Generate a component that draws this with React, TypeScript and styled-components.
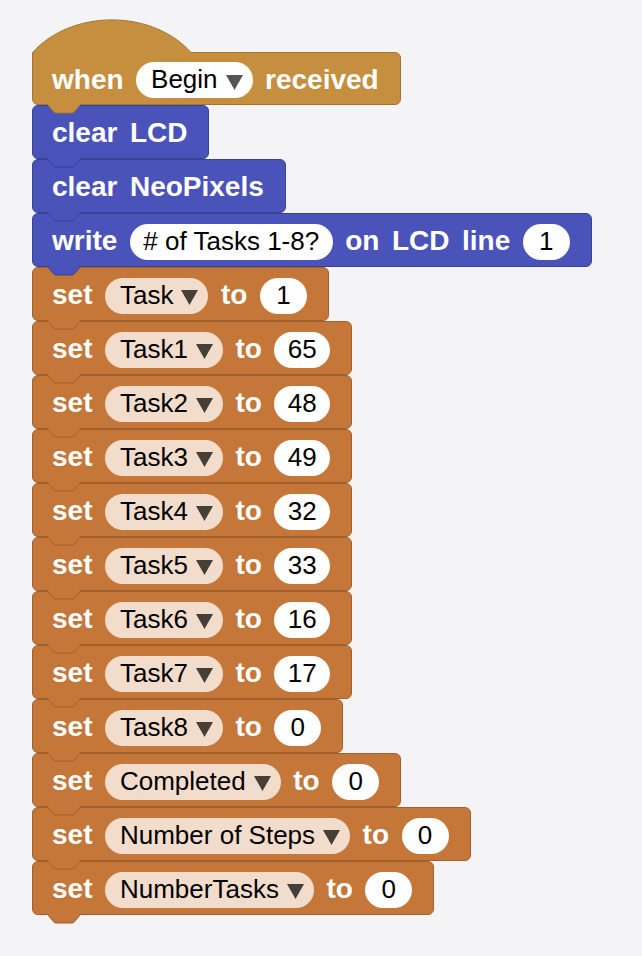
import React from "react";
import styled, { createGlobalStyle } from "styled-components";

const GlobalStyle = createGlobalStyle`
  html, body { margin: 0; padding: 0; background: #f4f4f6; }
  body { font-family: "Liberation Sans", Arial, Helvetica, sans-serif; }
`;

type Tone = "hat" | "blue" | "orange";

const palette: Record<Tone, { fill: string; stroke: string }> = {
  hat: { fill: "#c68e3f", stroke: "#a3742f" },
  blue: { fill: "#4a53b9", stroke: "#394195" },
  orange: { fill: "#c5773a", stroke: "#a2602c" },
};

const Workspace = styled.div`
  box-sizing: border-box;
  min-height: 956px;
  padding: 52px 0 40px 32px;
  display: flex;
  flex-direction: column;
  align-items: flex-start;
`;

const Shape = styled.div<{ $tone: Tone; $hat?: boolean }>`
  position: relative;
  box-sizing: border-box;
  display: inline-flex;
  align-items: center;
  gap: 12.5px;
  height: ${(p) => (p.$hat ? 53 : 54)}px;
  padding: 0 21px 0 19px;
  background: ${(p) => palette[p.$tone].fill};
  border: 1px solid ${(p) => palette[p.$tone].stroke};
  border-radius: ${(p) => (p.$hat ? "0 6px 6px 6px" : "6px")};
`;

const TabSvg = styled.svg`
  position: absolute;
  left: 14px;
  bottom: -10px;
  width: 34px;
  height: 10px;
  z-index: 2;
  overflow: visible;
`;

const CapSvg = styled.svg`
  position: absolute;
  left: -1px;
  top: -34px;
  width: 162px;
  height: 35px;
  z-index: 2;
  overflow: visible;
`;

const Label = styled.span`
  font-size: 28px;
  font-weight: 700;
  line-height: 1;
  margin-top: 2px;
  color: #ffffff;
  white-space: pre;
`;

const Pill = styled.span<{ $bg: string }>`
  box-sizing: border-box;
  display: inline-flex;
  align-items: center;
  height: 36px;
  margin-top: 3px;
  border-radius: 18px;
  background: ${(p) => p.$bg};
  font-size: 26px;
  line-height: 1;
  color: #000000;
  white-space: pre;
`;

const DropPill = styled(Pill)`
  gap: 8px;
  padding: 0 10px 2px 15px;
`;

const ValuePill = styled(Pill)`
  justify-content: center;
  min-width: 47px;
  padding: 0 13.5px 2px;
`;

const ArrowSvg = styled.svg`
  width: 17px;
  height: 15px;
  margin-top: 6px;
  flex: none;
`;

const Tab = ({ tone }: { tone: Tone }) => (
  <TabSvg viewBox="0 0 34 10">
    <path
      d="M0,0 L7,8.2 Q8,9 9.5,9 L24.5,9 Q26,9 27,8.2 L34,0 Z"
      fill={palette[tone].fill}
    />
    <path
      d="M0,0 L7,8.2 Q8,9 9.5,9 L24.5,9 Q26,9 27,8.2 L34,0"
      fill="none"
      stroke={palette[tone].stroke}
      strokeWidth={1}
    />
  </TabSvg>
);

const Cap = () => (
  <CapSvg viewBox="0 0 162 35">
    <path
      d="M0.5,35 L0.5,33.5 C40,-10 120,-10 159,33.5 L159,35 Z"
      fill={palette.hat.fill}
    />
    <path
      d="M0.5,35 L0.5,33.5 C40,-10 120,-10 159,33.5"
      fill="none"
      stroke={palette.hat.stroke}
      strokeWidth={1}
    />
  </CapSvg>
);

const Dropdown = ({ text, light }: { text: string; light?: boolean }) => (
  <DropPill $bg={light ? "#ffffff" : "#f2ddcc"}>
    <span>{text}</span>
    <ArrowSvg viewBox="0 0 17 15">
      <polygon points="0,0 17,0 8.5,15" fill={light ? "#555555" : "#463f38"} />
    </ArrowSvg>
  </DropPill>
);

const Value = ({ text }: { text: string }) => <ValuePill $bg="#ffffff">{text}</ValuePill>;

const Block = ({
  tone,
  hat,
  children,
}: {
  tone: Tone;
  hat?: boolean;
  children: React.ReactNode;
}) => (
  <Shape $tone={tone} $hat={hat}>
    {hat && <Cap />}
    {children}
    <Tab tone={tone} />
  </Shape>
);

const sets: [string, string][] = [
  ["Task", "1"],
  ["Task1", "65"],
  ["Task2", "48"],
  ["Task3", "49"],
  ["Task4", "32"],
  ["Task5", "33"],
  ["Task6", "16"],
  ["Task7", "17"],
  ["Task8", "0"],
  ["Completed", "0"],
  ["Number of Steps", "0"],
  ["NumberTasks", "0"],
];

export default function App() {
  return (
    <>
      <GlobalStyle />
      <Workspace>
        <Block tone="hat" hat>
          <Label>when</Label>
          <Dropdown text="Begin" light />
          <Label>received</Label>
        </Block>
        <Block tone="blue">
          <Label>clear</Label>
          <Label>LCD</Label>
        </Block>
        <Block tone="blue">
          <Label>clear</Label>
          <Label>NeoPixels</Label>
        </Block>
        <Block tone="blue">
          <Label>write</Label>
          <Value text="# of Tasks 1-8?" />
          <Label>on</Label>
          <Label>LCD</Label>
          <Label>line</Label>
          <Value text="1" />
        </Block>
        {sets.map(([name, val]) => (
          <Block tone="orange" key={name}>
            <Label>set</Label>
            <Dropdown text={name} />
            <Label>to</Label>
            <Value text={val} />
          </Block>
        ))}
      </Workspace>
    </>
  );
}
